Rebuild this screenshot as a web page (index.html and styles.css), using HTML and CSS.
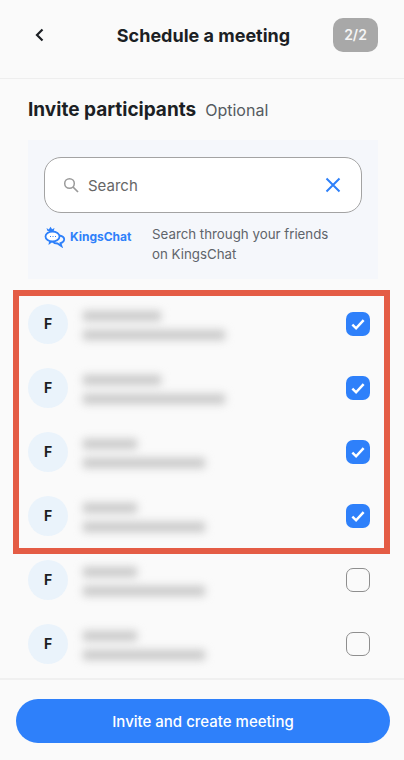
FILE: index.html
```html
<!DOCTYPE html>
<html lang="en">
<head>
  <meta charset="UTF-8">
  <meta name="viewport" content="width=device-width, initial-scale=1.0">
  <title>Schedule a meeting</title>
  <link rel="stylesheet" href="styles.css">
</head>
<body>
  <div class="page">
    <header class="topbar">
      <button class="back" type="button" aria-label="Back">
        <svg width="12" height="14" viewBox="0 0 12 14"><path d="M8.5 1.5 3 7l5.5 5.5" fill="none" stroke="#1c1f24" stroke-width="2.2"/></svg>
      </button>
      <h1 class="topbar-title">Schedule a meeting</h1>
      <span class="step">2/2</span>
    </header>

    <div class="heading">
      <h2>Invite participants</h2>
      <span class="optional">Optional</span>
    </div>

    <section class="search-panel">
      <div class="search-box">
        <svg class="search-icon" width="16" height="16" viewBox="0 0 16 16"><circle cx="6.5" cy="6.5" r="4.8" fill="none" stroke="#9a9a9a" stroke-width="1.5"/><path d="m10 10 5 5" stroke="#9a9a9a" stroke-width="1.7"/></svg>
        <span class="search-text">Search</span>
        <svg class="clear-icon" width="16" height="16" viewBox="0 0 16 16"><path d="m1.5 1.5 13 13M14.5 1.5l-13 13" stroke="#2e80fa" stroke-width="2"/></svg>
      </div>
      <div class="source">
        <div class="logo">
          <svg width="22" height="22" viewBox="0 0 22 22">
            <path d="m3.5 5-1-3 2.3 1.4L6.5.8l1.6 2.5 2.400-1.200-.8 3z" fill="#2e80fa"/>
            <ellipse cx="8.5" cy="10.5" rx="7" ry="5" fill="#fff" stroke="#2e80fa" stroke-width="1.8"/>
            <path d="M5 15.5 4.5 19 9 15.6z" fill="#2e80fa"/>
            <path d="M15.5 9.5c3 .6 5 2.3 4.6 4.4-.3 1.6-1.7 2.8-3.600 3.300l1 3-4-2.700c-2 0-3.800-.7-4.800-1.900" fill="none" stroke="#2e80fa" stroke-width="1.8"/>
            <path d="M6 10.5h1M8.5 10.5h1M11 10.5h1" stroke="#2e80fa" stroke-width="1.2"/>
          </svg>
          <span class="logo-text">KingsChat</span>
        </div>
        <p class="source-text">Search through your friends on KingsChat</p>
      </div>
    </section>

    <ul class="people">
      <li class="person">
        <span class="avatar">F</span>
        <div class="blur-lines"><i class="line-a long"></i><i class="line-b long"></i></div>
        <span class="check on"><svg width="18" height="18" viewBox="0 0 16 16"><path d="m3 8.5 3.300 3.300L13 4.500" fill="none" stroke="#fff" stroke-width="2.2"/></svg></span>
      </li>
      <li class="person">
        <span class="avatar">F</span>
        <div class="blur-lines"><i class="line-a long"></i><i class="line-b long"></i></div>
        <span class="check on"><svg width="18" height="18" viewBox="0 0 16 16"><path d="m3 8.5 3.300 3.300L13 4.500" fill="none" stroke="#fff" stroke-width="2.2"/></svg></span>
      </li>
      <li class="person">
        <span class="avatar">F</span>
        <div class="blur-lines"><i class="line-a"></i><i class="line-b"></i></div>
        <span class="check on"><svg width="18" height="18" viewBox="0 0 16 16"><path d="m3 8.5 3.300 3.300L13 4.500" fill="none" stroke="#fff" stroke-width="2.2"/></svg></span>
      </li>
      <li class="person">
        <span class="avatar">F</span>
        <div class="blur-lines"><i class="line-a"></i><i class="line-b"></i></div>
        <span class="check on"><svg width="18" height="18" viewBox="0 0 16 16"><path d="m3 8.5 3.300 3.300L13 4.500" fill="none" stroke="#fff" stroke-width="2.2"/></svg></span>
      </li>
      <li class="person">
        <span class="avatar">F</span>
        <div class="blur-lines"><i class="line-a"></i><i class="line-b"></i></div>
        <span class="check"></span>
      </li>
      <li class="person">
        <span class="avatar">F</span>
        <div class="blur-lines"><i class="line-a"></i><i class="line-b"></i></div>
        <span class="check"></span>
      </li>
    </ul>

    <footer class="bottom">
      <button class="invite" type="button">Invite and create meeting</button>
    </footer>

    <div class="highlight"></div>
  </div>
</body>
</html>
```

FILE: styles.css
```css
* {
  box-sizing: border-box;
}

body {
  margin: 0;
  background-color: #fafafa;
  font-family: Inter, Arial, sans-serif;
  color: #1c1f24;
}

.page {
  position: relative;
  display: flex;
  flex-direction: column;
  width: 404px;
  height: 760px;
  overflow: hidden;
}

.topbar {
  display: flex;
  align-items: center;
  height: 79px;
  padding: 0 26px 8px 34px;
  border-bottom: 1px solid #eeeeee;
}

.back {
  display: flex;
  width: 12px;
  padding: 0;
  border: none;
  background: none;
}

.topbar-title {
  flex: 1;
  margin: 0;
  padding-left: 28px;
  font-size: 18px;
  font-weight: 700;
  text-align: center;
}

.step {
  width: 45px;
  height: 34px;
  border-radius: 10px;
  background-color: #a8a8a8;
  color: #f5f5f5;
  font-size: 14px;
  font-weight: 600;
  line-height: 34px;
  text-align: center;
}

.heading {
  display: flex;
  align-items: baseline;
  gap: 9px;
  padding: 19px 28px 0;
  height: 61px;
}

.heading h2 {
  margin: 0;
  font-size: 19px;
  font-weight: 700;
}

.optional {
  font-size: 16px;
  color: #555a60;
}

.search-panel {
  height: 139px;
  margin: 0 26px 0 28px;
  padding: 17px 16px 0;
  background-color: #f5f7fb;
}

.search-box {
  display: flex;
  align-items: center;
  height: 56px;
  padding: 0 20px 0 18px;
  border: 1px solid #a3a3a3;
  border-radius: 17px;
  background-color: #fff;
}

.search-text {
  flex: 1;
  margin-left: 9px;
  font-size: 15px;
  color: #666;
}

.source {
  display: flex;
  margin-top: 11px;
}

.logo {
  display: flex;
  align-items: flex-start;
  gap: 4px;
  width: 108px;
  margin-top: 2px;
}

.logo-text {
  margin-top: 3px;
  font-size: 12px;
  font-weight: 700;
  color: #2e80fa;
}

.source-text {
  width: 190px;
  margin: 0;
  font-size: 13.3px;
  line-height: 20px;
  color: #5f646a;
}

.people {
  flex: 1;
  margin: 0;
  padding: 13px 0 0;
  list-style: none;
}

.person {
  display: flex;
  align-items: center;
  height: 64px;
  padding: 0 34px 0 28px;
}

.avatar {
  width: 40px;
  height: 40px;
  border-radius: 50%;
  background-color: #eaf3fb;
  font-size: 14px;
  font-weight: 700;
  line-height: 40px;
  text-align: center;
}

.blur-lines {
  flex: 1;
  display: flex;
  flex-direction: column;
  gap: 9px;
  margin: 2px 0 0 15px;
  filter: blur(4px);
}

.blur-lines i {
  display: block;
  height: 10px;
  background-color: #c8c8c8;
}

.line-a {
  width: 54px;
}

.line-b {
  width: 122px;
}

.line-a.long {
  width: 78px;
}

.line-b.long {
  width: 142px;
}

.check {
  display: flex;
  align-items: center;
  justify-content: center;
  width: 24px;
  height: 24px;
  border: 1.5px solid #8e8e8e;
  border-radius: 7px;
}

.check.on {
  border: none;
  background-color: #2e80fa;
}

.bottom {
  height: 82px;
  padding: 19px 14px 0 16px;
  border-top: 2px solid #f0f0f0;
}

.invite {
  display: block;
  width: 100%;
  height: 44px;
  border: none;
  border-radius: 22px;
  background-color: #2e80fa;
  color: #fff;
  font-family: inherit;
  font-size: 15px;
  font-weight: 500;
}

/* annotation box drawn on top of the list */
.highlight {
  position: absolute;
  top: 290px;
  left: 13px;
  width: 377px;
  height: 264px;
  border: 6px solid #e45c45;
}
```
